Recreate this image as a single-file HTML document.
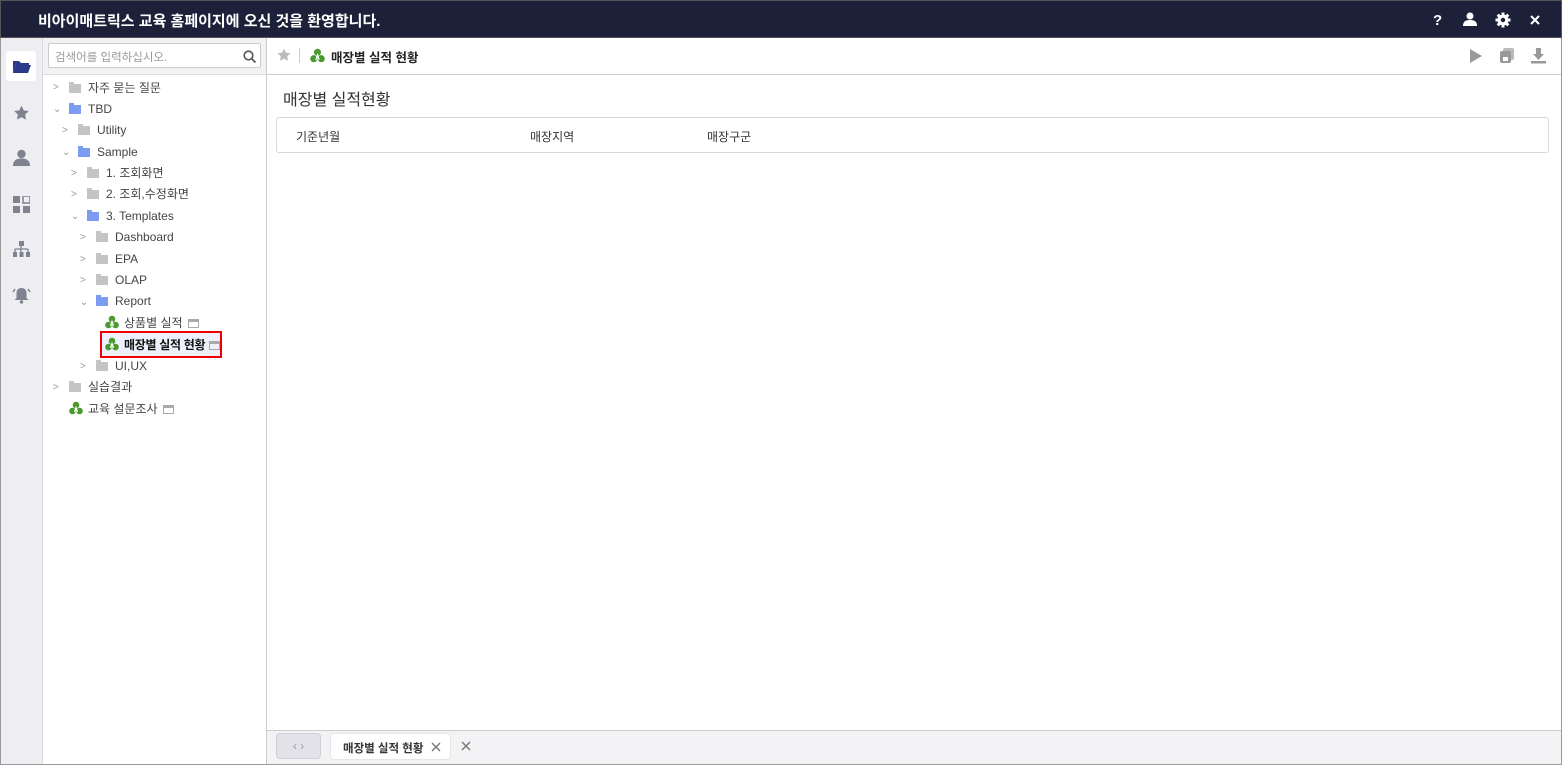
<!DOCTYPE html>
<html><head><meta charset="utf-8"><style>
*{margin:0;padding:0;box-sizing:border-box}
body{width:1562px;height:765px;overflow:hidden;font-family:"Liberation Sans","Noto Sans CJK KR",sans-serif;font-size:12px;color:#333;background:#fff;position:relative}
.hdr{position:absolute;left:0;top:0;width:1562px;height:38px;background:#1c2039;border:1px solid #555}
.hdr .t{position:absolute;left:37px;top:9px;color:#fff;font-size:15px;font-weight:bold}
.rail{position:absolute;left:0;top:38px;width:43px;height:727px;background:#ededf2;border-left:1px solid #999;border-right:1px solid #d8d8de}
.tree{position:absolute;left:43px;top:38px;width:224px;height:727px;background:#fff;border-right:1px solid #ccc}
.search{position:absolute;left:5px;top:5px;width:213px;height:25px;border:1px solid #ccc;border-radius:2px;color:#999;font-size:11.5px;padding:5px 6px}
.searchbar{position:absolute;left:0;top:0;width:223px;height:36px;background:#f2f2f5}
.row{position:absolute;height:20px;line-height:20px;font-size:12px;color:#444;white-space:nowrap}
.car{position:absolute;color:#999;font-size:10px}
.fold{display:inline-block;width:12px;height:9px;background:#c4c4c4;position:relative;vertical-align:-1px;margin-right:7px}
.fold:before{content:"";position:absolute;left:0;top:-2px;width:5px;height:2px;background:#c4c4c4}
.fold.b,.fold.b:before{background:#7c9cf2}
.rep{display:inline-block;width:14px;height:14px;vertical-align:-2px;margin-right:5px}
.win{display:inline-block;width:11px;height:9px;border:1px solid #aaa;border-top-width:3px;vertical-align:-1px;margin-left:5px}
.main{position:absolute;left:267px;top:38px;width:1295px;height:727px;border-right:1px solid #999}
.tb{position:absolute;left:0;top:0;width:1294px;height:37px;border-bottom:1px solid #ccc;background:#fff}
.cond{position:absolute;left:9px;top:79px;width:1273px;height:36px;border:1px solid #d8d8d8;border-radius:3px;font-size:12px}
.cond span{position:absolute;top:10px}
.bot{position:absolute;left:0;top:692px;width:1294px;height:35px;background:#f3f3f5;border-top:1px solid #ccc;border-bottom:1px solid #999}
</style></head><body>
<div class="hdr"><div class="t">비아이매트릭스 교육 홈페이지에 오신 것을 환영합니다.</div>
<svg style="position:absolute;left:1428px;top:10px" width="125" height="18" viewBox="0 0 125 18" fill="#fff">
<text x="4" y="14" font-size="15" font-weight="bold" font-family="Liberation Sans" fill="#fff">?</text>
<circle cx="41" cy="5" r="3.5"/><path d="M34 15c0-5 3-6 7-6s7 1 7 6z"/>
<g transform="translate(74,9)"><circle r="5.5"/><g stroke="#fff" stroke-width="3"><path d="M0-7.5V7.5M-7.5 0H7.5M-5.3-5.3L5.3 5.3M-5.3 5.3L5.3-5.3"/></g><circle r="2.2" fill="#1c2039"/></g>
<path d="M102 5l8 8M110 5l-8 8" stroke="#fff" stroke-width="2"/>
</svg></div>
<div class="rail">
<div style="position:absolute;left:5px;top:13px;width:30px;height:30px;background:#fff;border-radius:3px"></div>
<svg style="position:absolute;left:12px;top:21px" width="18" height="15"><path d="M0 2h6l2 2h8v2H3L0 14z" fill="#2c3a8c"/><path d="M3 6h15l-3 8H0z" fill="#2c3a8c"/></svg>
<svg style="position:absolute;left:12px;top:67px" width="17" height="16" viewBox="0 0 24 24"><path d="M12 1l3.4 7 7.6 1-5.5 5.3 1.3 7.7L12 18.3 5.2 22l1.3-7.7L1 9l7.6-1z" fill="#80828f"/></svg>
<svg style="position:absolute;left:12px;top:111px" width="17" height="17"><circle cx="8.5" cy="5" r="4.2" fill="#80828f"/><path d="M0 17c0-6 4-7.5 8.5-7.5s8.5 1.5 8.5 7.5z" fill="#80828f"/></svg>
<svg style="position:absolute;left:12px;top:158px" width="17" height="17" fill="#80828f"><rect width="7" height="7"/><rect x="10" width="7" height="7" fill="none" stroke="#80828f" stroke-width="1.5"/><rect y="10" width="7" height="7"/><rect x="10" y="10" width="7" height="7"/></svg>
<svg style="position:absolute;left:12px;top:203px" width="17" height="17" fill="#80828f"><rect x="6" width="5" height="5"/><path d="M8 5v3M2 8h13M2 8v3M8 8v3M15 8v3" stroke="#80828f" stroke-width="1.3"/><rect y="11" width="4" height="5"/><rect x="6.5" y="11" width="4" height="5"/><rect x="13" y="11" width="4" height="5"/></svg>
<svg style="position:absolute;left:11px;top:249px" width="19" height="17" fill="#80828f"><path d="M9.5 1c-3 0-5 2-5 5v5l-2 2h14l-2-2V6c0-3-2-5-5-5z"/><circle cx="9.5" cy="15" r="1.7"/><path d="M3 2L1 5M16 2l2 3" stroke="#80828f" stroke-width="1.5"/></svg>
</div>
<div class="tree">
<div class="searchbar"></div>
<div class="search" style="background:#fff">검색어를 입력하십시오.</div>
<svg style="position:absolute;left:200px;top:12px" width="13" height="13"><circle cx="5.5" cy="5.5" r="4.3" stroke="#555" stroke-width="1.6" fill="none"/><path d="M8.5 8.5l4 4" stroke="#555" stroke-width="1.8"/></svg>
<div style="position:absolute;left:0;top:36px;width:223px;height:1px;background:#ddd"></div>
</div>
<div class="car" style="left:53px;top:82px">&gt;</div><div class="row" style="left:69px;top:78px"><span class="fold"></span>자주 묻는 질문</div>
<div class="car" style="left:53px;top:104px">⌄</div><div class="row" style="left:69px;top:99px"><span class="fold b"></span>TBD</div>
<div class="car" style="left:62px;top:125px">&gt;</div><div class="row" style="left:78px;top:120px"><span class="fold"></span>Utility</div>
<div class="car" style="left:62px;top:147px">⌄</div><div class="row" style="left:78px;top:142px"><span class="fold b"></span>Sample</div>
<div class="car" style="left:71px;top:168px">&gt;</div><div class="row" style="left:87px;top:163px"><span class="fold"></span>1. 조회화면</div>
<div class="car" style="left:71px;top:189px">&gt;</div><div class="row" style="left:87px;top:184px"><span class="fold"></span>2. 조회,수정화면</div>
<div class="car" style="left:71px;top:211px">⌄</div><div class="row" style="left:87px;top:206px"><span class="fold b"></span>3. Templates</div>
<div class="car" style="left:80px;top:232px">&gt;</div><div class="row" style="left:96px;top:227px"><span class="fold"></span>Dashboard</div>
<div class="car" style="left:80px;top:254px">&gt;</div><div class="row" style="left:96px;top:249px"><span class="fold"></span>EPA</div>
<div class="car" style="left:80px;top:275px">&gt;</div><div class="row" style="left:96px;top:270px"><span class="fold"></span>OLAP</div>
<div class="car" style="left:80px;top:297px">⌄</div><div class="row" style="left:96px;top:291px"><span class="fold b"></span>Report</div>
<svg width="0" height="0" style="position:absolute"><defs><symbol id="rp" viewBox="0 0 14 14"><circle cx="7" cy="4" r="3.3" fill="#4a9a2e"/><circle cx="3.5" cy="10" r="3.3" fill="#4a9a2e"/><circle cx="10.5" cy="10" r="3.3" fill="#4a9a2e"/><path d="M5.5 11L7 6.5 8.5 11" stroke="#fff" stroke-width="1.2" fill="none"/></symbol></defs></svg>
<div class="row" style="left:105px;top:313px"><svg class="rep"><use href="#rp"/></svg>상품별 실적<span class="win"></span></div>
<div style="position:absolute;left:100px;top:331px;width:122px;height:27px;border:2px solid #e00;background:#eef0fb"></div>
<div class="row" style="left:105px;top:335px;font-weight:bold;color:#111;letter-spacing:-0.3px"><svg class="rep"><use href="#rp"/></svg>매장별 실적 현황<span class="win" style="margin-left:4px"></span></div>
<div class="car" style="left:80px;top:361px">&gt;</div><div class="row" style="left:96px;top:356px"><span class="fold"></span>UI,UX</div>
<div class="car" style="left:53px;top:382px">&gt;</div><div class="row" style="left:69px;top:377px"><span class="fold"></span>실습결과</div>
<div class="row" style="left:69px;top:399px"><svg class="rep"><use href="#rp"/></svg>교육 설문조사<span class="win"></span></div>

<div class="main">
<div class="tb">
<svg style="position:absolute;left:10px;top:10px" width="14" height="14" viewBox="0 0 24 24"><path d="M12 1l3.4 7 7.6 1-5.5 5.3 1.3 7.7L12 18.3 5.2 22l1.3-7.7L1 9l7.6-1z" fill="#bbb"/></svg>
<div style="position:absolute;left:32px;top:10px;width:1px;height:15px;background:#ccc"></div>
<svg style="position:absolute;left:43px;top:10px" width="15" height="15"><use href="#rp"/></svg>
<div style="position:absolute;left:64px;top:9px;font-weight:bold;font-size:12.5px;color:#222">매장별 실적 현황</div>
<svg style="position:absolute;left:1202px;top:11px" width="14" height="14"><path d="M1 0l12 7-12 7z" fill="#999"/></svg>
<svg style="position:absolute;left:1233px;top:10px" width="15" height="16" fill="#999"><rect x="3" y="0" width="11" height="12" rx="2" fill="#bbb"/><rect x="0" y="3" width="11" height="12" rx="2"/><rect x="3" y="9" width="5" height="4" fill="#fff"/></svg>
<svg style="position:absolute;left:1264px;top:10px" width="15" height="16" fill="#999"><path d="M5 0h5v6h3l-5.5 6L2 6h3z"/><rect x="0" y="13" width="15" height="2.5"/></svg>
</div>
<div style="position:absolute;left:16px;top:48px;font-size:16px;color:#333">매장별 실적현황</div>
<div class="cond"><span style="left:19px">기준년월</span><span style="left:253px">매장지역</span><span style="left:430px">매장구군</span></div>
<div class="bot">
<div style="position:absolute;left:9px;top:2px;width:45px;height:26px;background:#e2e2e8;border:1px solid #d0d0d6;border-radius:4px;color:#999;font-size:12px;text-align:center;line-height:24px">‹ ›</div>
<div style="position:absolute;left:63px;top:2px;width:121px;height:27px;background:#fff;border:1px solid #e6e6e6;border-radius:4px;font-size:11.5px;font-weight:bold;color:#333;padding:6px 12px">매장별 실적 현황</div>
<svg style="position:absolute;left:164px;top:11px" width="10" height="10"><path d="M1 1l8 8M9 1l-8 8" stroke="#777" stroke-width="1.4"/></svg>
<svg style="position:absolute;left:194px;top:10px" width="10" height="10"><path d="M1 1l8 8M9 1l-8 8" stroke="#777" stroke-width="1.4"/></svg>
</div>
</div>
<div style="position:absolute;left:0;top:764px;width:1562px;height:1px;background:#999"></div>
</body></html>
